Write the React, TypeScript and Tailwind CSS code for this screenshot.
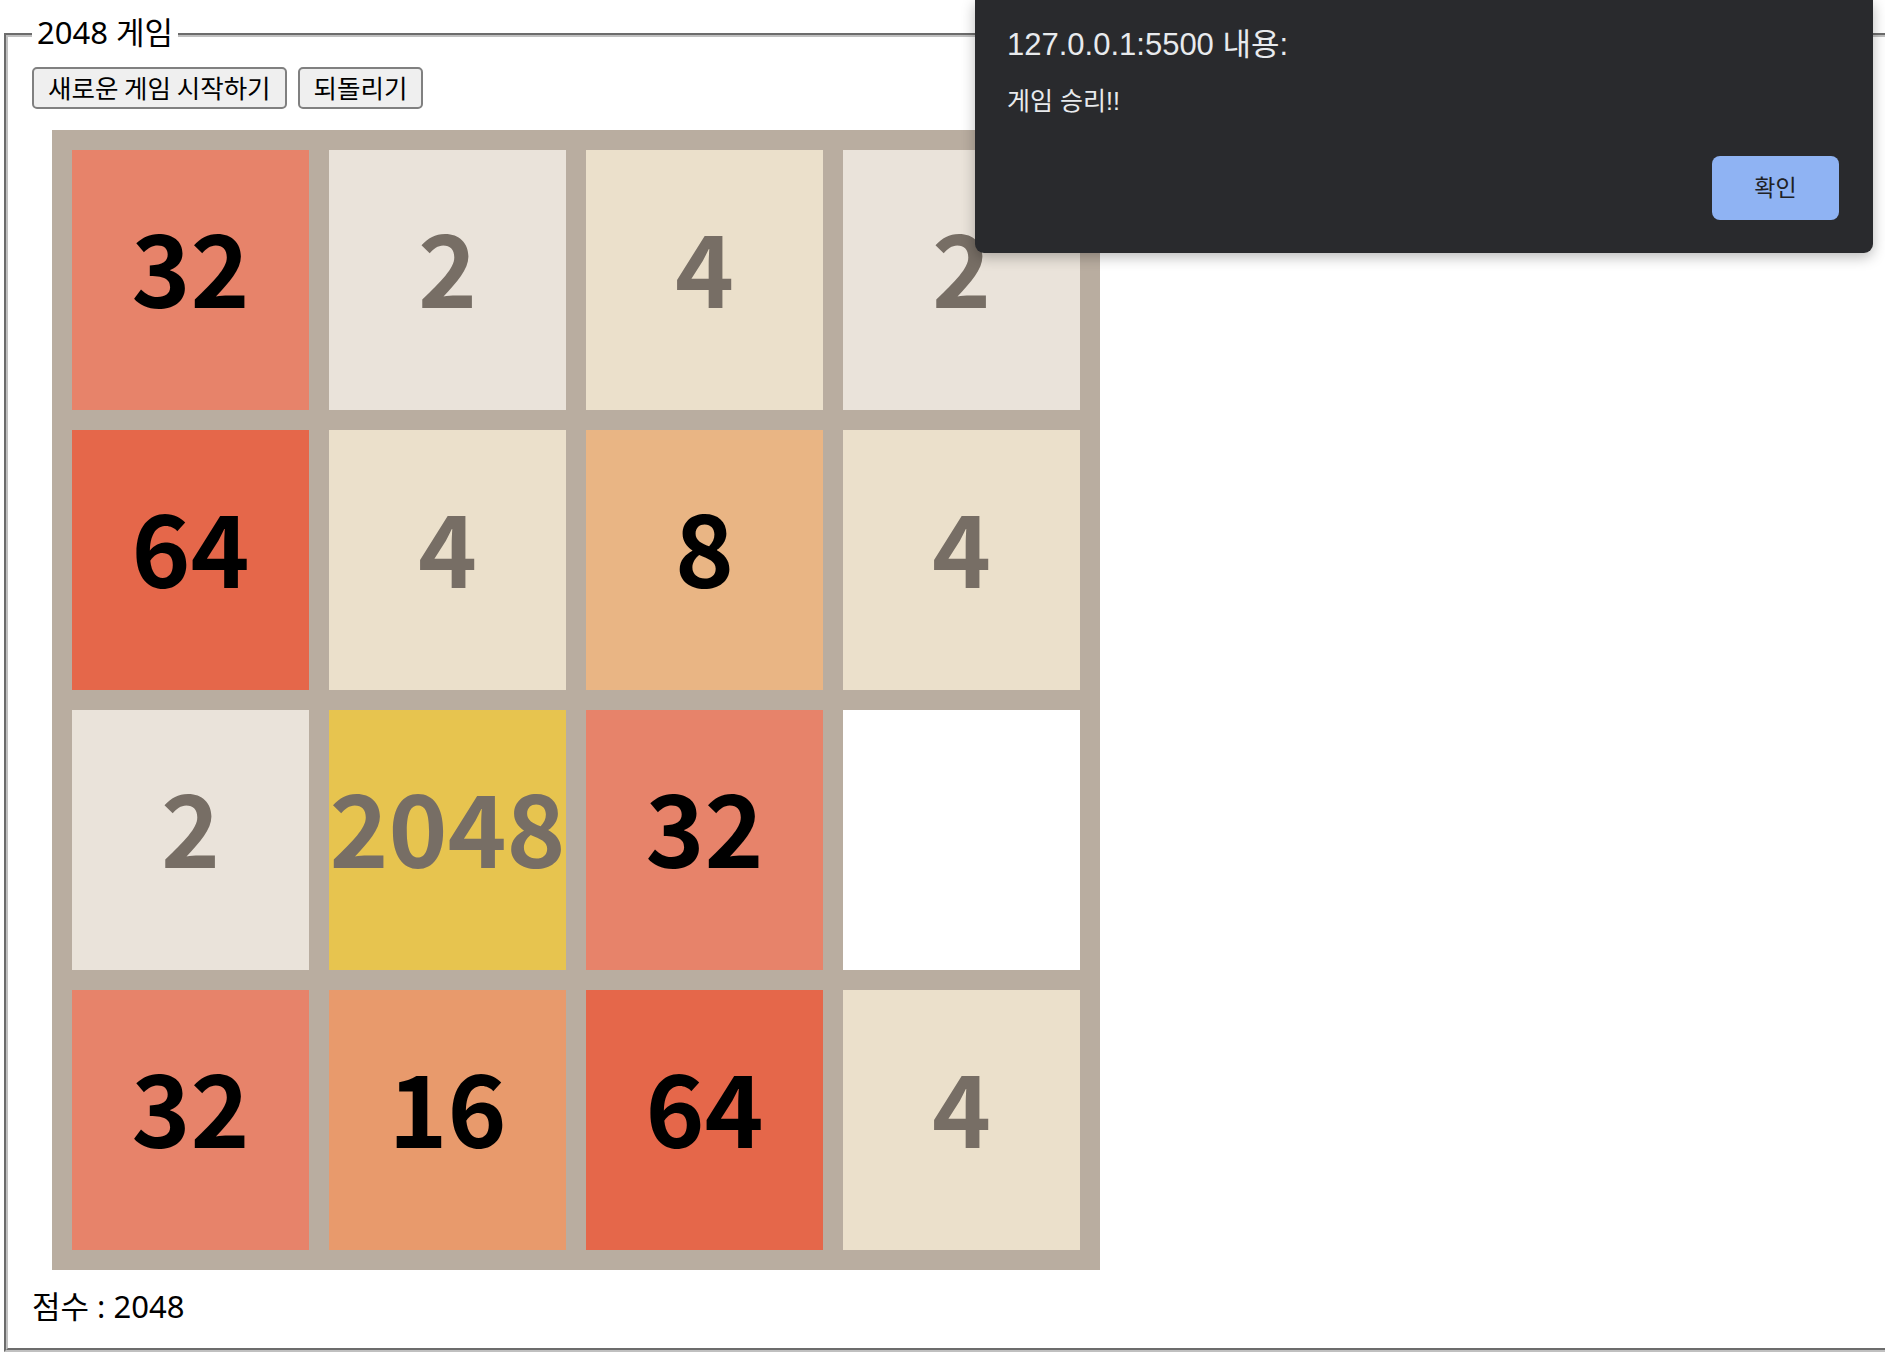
const tiles: { v: number | null; bg: string; fg: string }[] = [
  { v: 32, bg: 'bg-[#e7836a]', fg: 'text-black' },
  { v: 2, bg: 'bg-[#eae3da]', fg: 'text-[#776e65]' },
  { v: 4, bg: 'bg-[#ebe0cb]', fg: 'text-[#776e65]' },
  { v: 2, bg: 'bg-[#eae3da]', fg: 'text-[#776e65]' },

  { v: 64, bg: 'bg-[#e5674a]', fg: 'text-black' },
  { v: 4, bg: 'bg-[#ebe0cb]', fg: 'text-[#776e65]' },
  { v: 8, bg: 'bg-[#e9b584]', fg: 'text-black' },
  { v: 4, bg: 'bg-[#ebe0cb]', fg: 'text-[#776e65]' },

  { v: 2, bg: 'bg-[#eae3da]', fg: 'text-[#776e65]' },
  { v: 2048, bg: 'bg-[#e7c44f]', fg: 'text-[#776e65]' },
  { v: 32, bg: 'bg-[#e7836a]', fg: 'text-black' },
  { v: null, bg: 'bg-white', fg: 'text-black' },

  { v: 32, bg: 'bg-[#e7836a]', fg: 'text-black' },
  { v: 16, bg: 'bg-[#e89a6c]', fg: 'text-black' },
  { v: 64, bg: 'bg-[#e5674a]', fg: 'text-black' },
  { v: 4, bg: 'bg-[#ebe0cb]', fg: 'text-[#776e65]' },
]

function Tile({ v, bg, fg }: { v: number | null; bg: string; fg: string }) {
  return (
    <div className={`h-[260px] flex items-center justify-center ${bg}`}>
      {v !== null && (
        <span
          className={`font-['Noto_Sans_CJK_KR',sans-serif] text-[100px] font-bold leading-none pb-[30px] ${fg}`}
        >
          {v}
        </span>
      )}
    </div>
  )
}

function AlertDialog() {
  return (
    <div className="absolute left-[975px] top-0 w-[898px] h-[253px] bg-[#292a2d] rounded-b-[9px] shadow-[0_4px_14px_rgba(0,0,0,0.28)] text-[#e8eaed] font-['Liberation_Sans','Noto_Sans_CJK_KR',sans-serif]">
      <div className="pl-[32px] pt-[26px] text-[31px] leading-[38px]">127.0.0.1:5500 내용:</div>
      <div className="pl-[32px] pt-[21px] text-[25px] leading-[32px]">게임 승리!!</div>
      <div className="flex justify-end pr-[34px] pt-[39px]">
        <button className="w-[127px] h-[64px] rounded-[8px] bg-[#8fb3f3] text-[#202124] text-[23px]">
          확인
        </button>
      </div>
    </div>
  )
}

export default function App() {
  return (
    <div className="relative w-full h-[1368px] overflow-hidden bg-white font-['Noto_Sans','Noto_Sans_CJK_KR',sans-serif] text-black">
      <fieldset className="ml-[4px] mt-[13px] w-[1900px] border-4 [border-style:groove] border-[#c0c0c0] pl-[24px] pr-[24px] pt-[10px] pb-[20px]">
        <legend className="px-[5px] text-[31px] leading-[44px] -translate-y-[3px]">2048 게임</legend>
        <div className="flex gap-[11px] font-['Noto_Sans_CJK_KR',sans-serif]">
          <button className="h-[42px] px-[14px] border-2 border-[#808080] rounded-[5px] bg-[#efefef] text-[25.5px] leading-none pb-[3px]">
            새로운 게임 시작하기
          </button>
          <button className="h-[42px] px-[14px] border-2 border-[#808080] rounded-[5px] bg-[#efefef] text-[25.5px] leading-none pb-[3px]">
            되돌리기
          </button>
        </div>
        <div className="mt-[21px] ml-[20px] w-[1048px] grid grid-cols-4 gap-[20px] p-[20px] bg-[#b9ada0]">
          {tiles.map((t, i) => (
            <Tile key={i} {...t} />
          ))}
        </div>
        <div className="mt-[14px] text-[31px] leading-[44px]">점수 : 2048</div>
      </fieldset>
      <AlertDialog />
    </div>
  )
}
